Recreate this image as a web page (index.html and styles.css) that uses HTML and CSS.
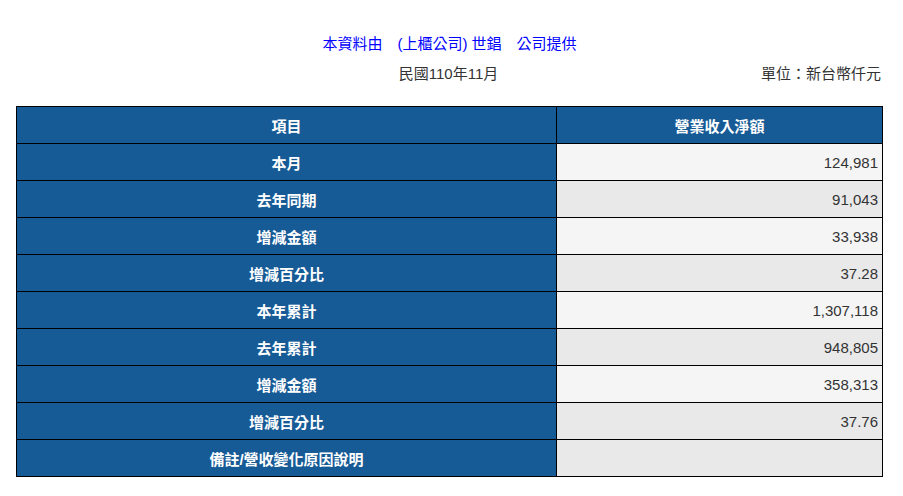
FILE: index.html
```html
<!DOCTYPE html>
<html lang="zh-Hant">
<head>
<meta charset="utf-8">
<title>營業收入</title>
<link rel="stylesheet" href="styles.css">
</head>
<body>
<div class="page">
  <div class="title">本資料由　(上櫃公司) 世錩　公司提供</div>
  <div class="subrow">
    <span></span>
    <span class="date">民國110年11月</span>
    <span class="unit">單位：新台幣仟元</span>
  </div>
  <table class="rev">
    <colgroup><col class="c1"><col class="c2"></colgroup>
    <thead>
      <tr><th>項目</th><th>營業收入淨額</th></tr>
    </thead>
    <tbody>
      <tr class="odd"><th>本月</th><td>124,981</td></tr>
      <tr class="even"><th>去年同期</th><td>91,043</td></tr>
      <tr class="odd"><th>增減金額</th><td>33,938</td></tr>
      <tr class="even"><th>增減百分比</th><td>37.28</td></tr>
      <tr class="odd"><th>本年累計</th><td>1,307,118</td></tr>
      <tr class="even"><th>去年累計</th><td>948,805</td></tr>
      <tr class="odd"><th>增減金額</th><td>358,313</td></tr>
      <tr class="even"><th>增減百分比</th><td>37.76</td></tr>
      <tr class="even"><th>備註/營收變化原因說明</th><td></td></tr>
    </tbody>
  </table>
</div>
</body>
</html>
```

FILE: styles.css
```css
html, body {
  margin: 0;
  padding: 0;
  background: #ffffff;
}
body {
  font-family: "Liberation Sans", Arial, "Noto Sans CJK TC", sans-serif;
  font-size: 15px;
  color: #333333;
}
.page {
  padding: 34px 22px 0 16px;
}
.title {
  text-align: center;
  color: #0000ff;
  font-size: 15px;
  line-height: 20px;
  padding-left: 2px;
}
.subrow {
  display: grid;
  grid-template-columns: 1fr auto 1fr;
  margin-top: 10px;
  line-height: 20px;
  color: #333333;
}
.date {
  padding-left: 0;
}
.unit {
  justify-self: end;
}
.rev {
  margin-top: 22px;
  border-collapse: collapse;
  width: 866px;
  table-layout: fixed;
}
.c1 { width: 540px; }
.c2 { width: 326px; }
.rev th, .rev td {
  border: 1px solid #000000;
  height: 37px;
  padding: 0 4px;
  box-sizing: border-box;
}
.rev th {
  background: #175b96;
  color: #ffffff;
  font-weight: bold;
  text-align: center;
  font-size: 15px;
}
.rev td {
  text-align: right;
  font-size: 15px;
  color: #333333;
}
.odd td { background: #f5f5f5; }
.even td { background: #e9e9e9; }
```
